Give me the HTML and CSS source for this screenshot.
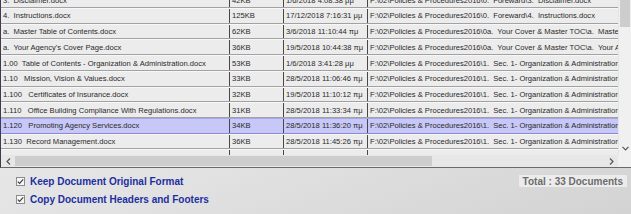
FILE: index.html
```html
<!DOCTYPE html>
<html>
<head>
<meta charset="utf-8">
<link rel="stylesheet" href="styles.css">
</head>
<body>
<div class="win">
  <div class="list">
    <div class="view">
      <div class="viewport">
        <div class="rows">
          <div class="row"><div class="c name">3.&nbsp; Disclaimer.docx</div><div class="c size">42KB</div><div class="c date">1/6/2018 4:08:38 μμ</div><div class="c path">F:\02\Policies &amp; Procedures2016\0.&nbsp; Foreward\3.&nbsp; Disclaimer.docx</div></div>
          <div class="row"><div class="c name">4.&nbsp; Instructions.docx</div><div class="c size">125KB</div><div class="c date">17/12/2018 7:16:31 μμ</div><div class="c path">F:\02\Policies &amp; Procedures2016\0.&nbsp; Foreward\4.&nbsp; Instructions.docx</div></div>
          <div class="row"><div class="c name">a.&nbsp; Master Table of Contents.docx</div><div class="c size">62KB</div><div class="c date">3/6/2018 11:10:44 πμ</div><div class="c path">F:\02\Policies &amp; Procedures2016\0a.&nbsp; Your Cover &amp; Master TOC\a.&nbsp; Master Table of Contents.docx</div></div>
          <div class="row"><div class="c name">a.&nbsp; Your Agency's Cover Page.docx</div><div class="c size">36KB</div><div class="c date">19/5/2018 10:44:38 πμ</div><div class="c path">F:\02\Policies &amp; Procedures2016\0a.&nbsp; Your Cover &amp; Master TOC\a.&nbsp; Your Agency's Cover Page.docx</div></div>
          <div class="row"><div class="c name">1.00&nbsp; Table of Contents - Organization &amp; Administration.docx</div><div class="c size">53KB</div><div class="c date">1/6/2018 3:41:28 μμ</div><div class="c path">F:\02\Policies &amp; Procedures2016\1.&nbsp; Sec. 1- Organization &amp; Administration\1.00&nbsp; Table of Contents.docx</div></div>
          <div class="row"><div class="c name">1.10&nbsp;&nbsp; Mission, Vision &amp; Values.docx</div><div class="c size">33KB</div><div class="c date">28/5/2018 11:06:46 πμ</div><div class="c path">F:\02\Policies &amp; Procedures2016\1.&nbsp; Sec. 1- Organization &amp; Administration\1.10&nbsp; Mission.docx</div></div>
          <div class="row"><div class="c name">1.100&nbsp;&nbsp; Certificates of Insurance.docx</div><div class="c size">32KB</div><div class="c date">19/5/2018 11:10:12 πμ</div><div class="c path">F:\02\Policies &amp; Procedures2016\1.&nbsp; Sec. 1- Organization &amp; Administration\1.100&nbsp; Certificates.docx</div></div>
          <div class="row"><div class="c name">1.110&nbsp;&nbsp; Office Building Compliance With Regulations.docx</div><div class="c size">31KB</div><div class="c date">28/5/2018 11:33:34 πμ</div><div class="c path">F:\02\Policies &amp; Procedures2016\1.&nbsp; Sec. 1- Organization &amp; Administration\1.110&nbsp; Office.docx</div></div>
          <div class="row sel"><div class="c name">1.120&nbsp;&nbsp; Promoting Agency Services.docx</div><div class="c size">34KB</div><div class="c date">28/5/2018 11:36:20 πμ</div><div class="c path">F:\02\Policies &amp; Procedures2016\1.&nbsp; Sec. 1- Organization &amp; Administration\1.120&nbsp; Promoting.docx</div></div>
          <div class="row"><div class="c name">1.130&nbsp; Record Management.docx</div><div class="c size">36KB</div><div class="c date">28/5/2018 11:45:26 πμ</div><div class="c path">F:\02\Policies &amp; Procedures2016\1.&nbsp; Sec. 1- Organization &amp; Administration\1.130&nbsp; Record.docx</div></div>
          <div class="row"><div class="c name">1.131&nbsp; Communicating with the IRS.docx</div><div class="c size">61KB</div><div class="c date">28/5/2018 11:57:18 πμ</div><div class="c path">F:\02\Policies &amp; Procedures2016\1.&nbsp; Sec. 1- Organization &amp; Administration\1.131&nbsp; IRS.docx</div></div>
        </div>
      </div>
      <div class="vscroll">
        <div class="vthumb"></div>
        <div class="vtrack"></div>
        <div class="vbtn"><svg width="7" height="5" viewBox="0 0 7 5"><path d="M0.5 0.8 L3.5 3.8 L6.5 0.8" fill="none" stroke="#555" stroke-width="1.2"/></svg></div>
      </div>
    </div>
    <div class="hscroll">
      <div class="hbtn"><svg width="5" height="7" viewBox="0 0 5 7"><path d="M4 0.5 L1 3.5 L4 6.5" fill="none" stroke="#555" stroke-width="1.2"/></svg></div>
      <div class="hthumb"></div>
      <div class="htrack"></div>
      <div class="hbtn"><svg width="5" height="7" viewBox="0 0 5 7"><path d="M1 0.5 L4 3.5 L1 6.5" fill="none" stroke="#555" stroke-width="1.2"/></svg></div>
      <div class="corner"></div>
    </div>
  </div>
  <div class="panel">
    <div class="options">
      <div class="opt"><span class="cb"><svg width="9" height="9" viewBox="0 0 9 9"><path d="M1.8 4.6 L3.6 6.4 L7.2 2.4" fill="none" stroke="#3a3a3a" stroke-width="1.1"/></svg></span><span class="lbl">Keep Document Original Format</span></div>
      <div class="opt"><span class="cb"><svg width="9" height="9" viewBox="0 0 9 9"><path d="M1.8 4.6 L3.6 6.4 L7.2 2.4" fill="none" stroke="#3a3a3a" stroke-width="1.1"/></svg></span><span class="lbl">Copy Document Headers and Footers</span></div>
      <div class="opt last"><span class="cb"></span><span class="lbl">Keep Source Document Numbering</span></div>
    </div>
    <div class="total">Total : 33 Documents</div>
  </div>
</div>
</body>
</html>
```

FILE: styles.css
```css
html, body {
  margin: 0;
  padding: 0;
}
body {
  width: 631px;
  height: 214px;
  overflow: hidden;
  font-family: "Liberation Sans", Arial, sans-serif;
}
.win {
  width: 631px;
  height: 214px;
  display: flex;
  flex-direction: column;
  background: linear-gradient(160deg, #efefef 0%, #e2e2e2 55%, #d3d3d3 100%);
}
.list {
  display: flex;
  flex-direction: column;
  border-left: 1px solid #3c3c50;
  border-bottom: 1px solid #6a6a6a;
  background: #ececec;
}
.view {
  display: flex;
  height: 155px;
}
.viewport {
  width: 617px;
  height: 155px;
  overflow: hidden;
}
.rows {
  margin-top: -7.6px;
  width: 900px;
}
.row {
  display: flex;
  height: 15.7px;
  box-sizing: border-box;
  border-bottom: 1px solid #a2a2a2;
  border-top: 1px solid #f7f7f7;
  background: #ececec;
  color: #2a2a2a;
  font-size: 7.6px;
  white-space: nowrap;
}
.row.sel {
  background: #c7c7f8;
  border-top-color: #a5a5e8;
  border-bottom-color: #8a8ad6;
}
.c {
  display: flex;
  align-items: center;
  box-sizing: border-box;
  padding-left: 2px;
  overflow: hidden;
  border-right: 1px solid #474747;
}
.name { width: 229px; }
.size { width: 54px; }
.date { width: 84px; }
.path { width: 500px; border-right: none; }
.vscroll {
  width: 13px;
  display: flex;
  flex-direction: column;
  background: #f0f0f0;
  border-left: 1px solid #e4e4e4;
  box-sizing: border-box;
}
.vthumb {
  height: 27px;
  background: #cdcdcd;
  margin: 0 1px;
}
.vtrack { flex: 1; }
.vbtn {
  height: 14px;
  display: flex;
  align-items: center;
  justify-content: center;
}
.hscroll {
  display: flex;
  height: 12px;
  background: #e7e7e7;
}
.hbtn {
  width: 14px;
  display: flex;
  align-items: center;
  justify-content: center;
}
.hthumb {
  width: 417px;
  background: #cdcdcd;
  margin: 1px 0;
}
.htrack { flex: 1; }
.corner {
  width: 13px;
  background: #f0f0f0;
}
.panel {
  flex: 1;
  display: flex;
  justify-content: space-between;
  align-items: flex-start;
  padding: 4px 4px 0 16px;
  overflow: hidden;
}
.options {
  display: flex;
  flex-direction: column;
}
.opt {
  display: flex;
  align-items: center;
  height: 18px;
  gap: 5px;
}
.opt.last {
  margin-top: 2px;
}
.cb {
  width: 9px;
  height: 9px;
  box-sizing: border-box;
  border: 1px solid #8c8c8c;
  background: #f7f7f7;
  display: flex;
  align-items: center;
  justify-content: center;
}
.cb svg { flex: none; }
.lbl {
  font-size: 10px;
  font-weight: bold;
  color: #1d2f9f;
}
.total {
  margin-top: 3px;
  height: 12px;
  padding: 0 4px;
  display: flex;
  align-items: center;
  background: #ececec;
  color: #6c6c6c;
  font-size: 10px;
  font-weight: bold;
}
```
